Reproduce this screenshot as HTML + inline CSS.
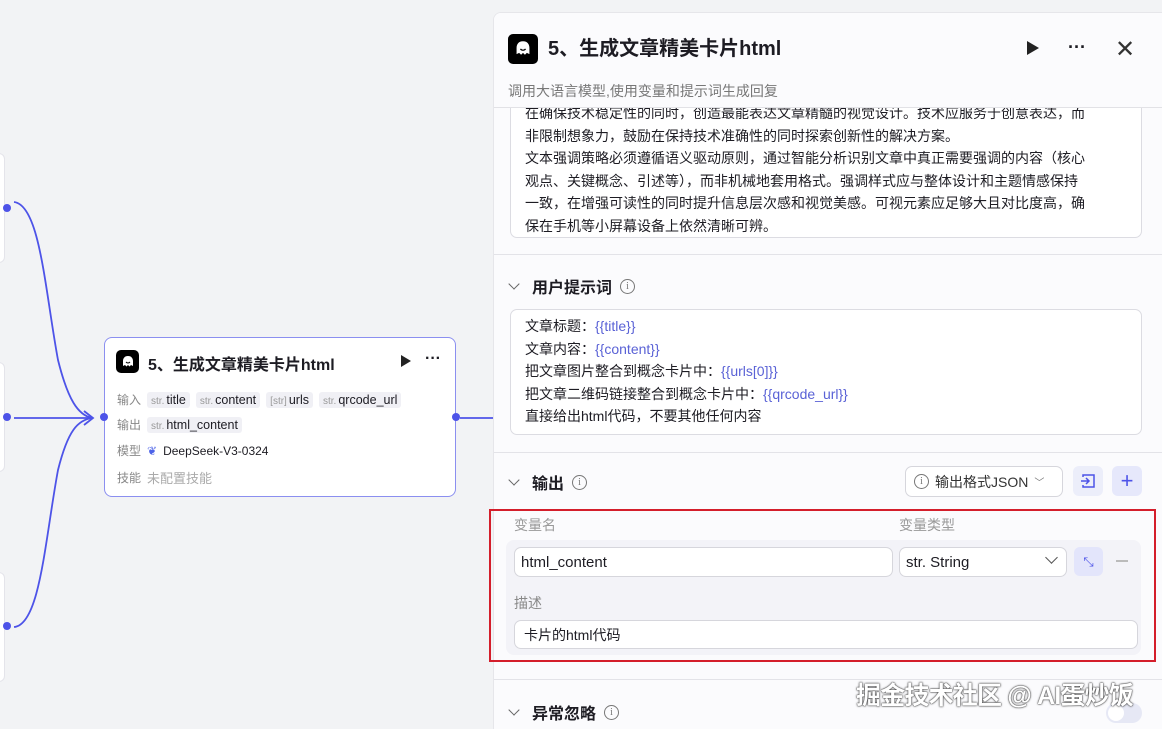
<!DOCTYPE html>
<html><head><meta charset="utf-8"><style>
*{box-sizing:border-box;margin:0;padding:0}
body{width:1162px;height:729px;overflow:hidden;background:#f2f3f5;font-family:"Liberation Sans","Noto Sans CJK SC",sans-serif;position:relative;color:#1d1c23}
.abs{position:absolute}
.lnode{position:absolute;left:-10px;width:15px;background:#fff;border:1px solid #e4e4ea;border-radius:6px}
.dot{position:absolute;width:8px;height:8px;border-radius:50%;background:#4d53e8}
.node{left:104px;top:337px;width:352px;height:160px;background:#fff;border:1px solid #8b8ff0;border-radius:8px}
.logo{background:#000;border-radius:5px;display:flex;align-items:center;justify-content:center}
.row{position:absolute;left:12px;font-size:12px;color:#888;display:flex;align-items:center;gap:6px;white-space:nowrap}
.tag{background:#f0f0f5;border-radius:3px;padding:1px 4px;color:#1d1c23;font-size:12.5px}
.tag i{font-style:normal;color:#999;font-size:10px;margin-right:2px}
.panel{left:493px;top:12px;width:669px;height:717px;background:#fbfbfd;border-left:1px solid #e6e6ea;border-top:1px solid #e6e6ea;border-radius:8px 0 0 0;overflow:hidden}
.box{position:absolute;background:#fff;border:1px solid #dcdce2;border-radius:7px;font-size:14px;line-height:22.6px;color:#1d1c23}
.v{color:#5a62d6}
.sec{position:absolute;left:16px;font-size:16px;font-weight:bold;display:flex;align-items:center;gap:8px;color:#1d1c23}
.chev{width:8px;height:8px;border-right:1.5px solid #666;border-bottom:1.5px solid #666;transform:rotate(45deg);margin-top:-4px;margin-right:6px}
.info{width:15px;height:15px;border:1.2px solid #777;border-radius:50%;font-size:10px;font-weight:normal;display:inline-flex;align-items:center;justify-content:center;color:#777;font-family:"Liberation Serif",serif}
.sep{position:absolute;left:0;right:0;height:1px;background:#e3e3e8}
.inp{position:absolute;background:#fff;border:1px solid #d6d6dc;border-radius:7px;font-size:15px;padding-left:6px;display:flex;align-items:center}
</style></head><body>
<div class="lnode" style="top:153px;height:110px"></div>
<div class="lnode" style="top:362px;height:110px"></div>
<div class="lnode" style="top:572px;height:110px"></div>
<svg class="abs" style="left:0;top:0" width="500" height="729">
<g fill="none" stroke="#4d53e8" stroke-width="1.8">
<path d="M14 202 C40 205,45 290,58 360 C68 400,78 415,92 418"/>
<path d="M14 418 L92 418"/>
<path d="M14 627 C40 625,45 540,58 470 C68 430,78 420,92 418"/>
<path d="M84 411 L93 418 L84 425"/>
<path d="M460 418 L495 418"/>
</g></svg>
<div class="dot" style="left:3px;top:204px"></div>
<div class="dot" style="left:3px;top:413px"></div>
<div class="dot" style="left:3px;top:622px"></div>
<div class="abs node">
 <div class="abs logo" style="left:11px;top:12px;width:23px;height:23px"><svg width="14" height="14" viewBox="0 0 14 14"><path d="M7 1C3.5 1 2 3.5 2 6v5l2-1 1.5 1.5L7 10l1.5 1.5L10 10l2 1V6C12 3.5 10.5 1 7 1z" fill="#fff"/><path d="M5 7q2 2 4 0" stroke="#000" fill="none"/></svg></div>
 <div class="abs" style="left:43px;top:13px;font-size:16px;font-weight:bold;color:#1d1c23">5、生成文章精美卡片html</div>
 <div class="abs" style="left:296px;top:17px;width:0;height:0;border-left:10px solid #222;border-top:6px solid transparent;border-bottom:6px solid transparent"></div>
 <div class="abs" style="left:320px;top:12px;font-size:16px;font-weight:bold">···</div>
 <div class="row" style="top:53px">输入 <span class="tag"><i>str.</i>title</span><span class="tag"><i>str.</i>content</span><span class="tag"><i>[str]</i>urls</span><span class="tag"><i>str.</i>qrcode_url</span></div>
 <div class="row" style="top:78px">输出 <span class="tag"><i>str.</i>html_content</span></div>
 <div class="row" style="top:104px">模型 <span style="color:#4d63e8">❦</span><span style="color:#1d1c23">DeepSeek-V3-0324</span></div>
 <div class="row" style="top:130px">技能 <span style="color:#aaa;font-size:13px">未配置技能</span></div>
</div>
<div class="dot" style="left:100px;top:413px"></div>
<div class="dot" style="left:452px;top:413px"></div>

<div class="abs panel">
 <div class="box" style="left:16px;top:60px;width:632px;height:165px;padding:2px 14px;overflow:hidden">
  <div style="margin-top:26px">在确保技术稳定性的同时，创造最能表达文章精髓的视觉设计。技术应服务于创意表达，而</div>
  <div>非限制想象力，鼓励在保持技术准确性的同时探索创新性的解决方案。</div>
  <div>文本强调策略必须遵循语义驱动原则，通过智能分析识别文章中真正需要强调的内容（核心</div>
  <div>观点、关键概念、引述等），而非机械地套用格式。强调样式应与整体设计和主题情感保持</div>
  <div>一致，在增强可读性的同时提升信息层次感和视觉美感。可视元素应足够大且对比度高，确</div>
  <div>保在手机等小屏幕设备上依然清晰可辨。</div>
 </div>
 <div class="abs" style="left:0;top:0;width:669px;height:95px;background:#fbfbfd;border-bottom:1px solid #e2e2e6"></div>
 <div class="abs logo" style="left:14px;top:21px;width:30px;height:30px"><svg width="18" height="18" viewBox="0 0 14 14"><path d="M7 1C3.5 1 2 3.5 2 6v5l2-1 1.5 1.5L7 10l1.5 1.5L10 10l2 1V6C12 3.5 10.5 1 7 1z" fill="#fff"/><path d="M5 7q2 2 4 0" stroke="#000" fill="none"/></svg></div>
 <div class="abs" style="left:54px;top:19px;font-size:20px;font-weight:bold">5、生成文章精美卡片html</div>
 <div class="abs" style="left:533px;top:28px;border-left:12px solid #222;border-top:7px solid transparent;border-bottom:7px solid transparent"></div>
 <div class="abs" style="left:574px;top:24px;font-size:18px;font-weight:bold">···</div>
 <div class="abs" style="left:621px;top:22px;font-size:24px;color:#333">✕</div>
 <div class="abs" style="left:14px;top:68px;font-size:14px;color:#777">调用大语言模型,使用变量和提示词生成回复</div>

 <div class="sep" style="top:241px"></div>
 <div class="sec" style="top:261px"><span class="chev"></span>用户提示词<span class="info">i</span></div>
 <div class="box" style="left:16px;top:296px;width:632px;height:126px;padding:5px 14px">
  <div>文章标题：<span class="v">{{title}}</span></div>
  <div>文章内容：<span class="v">{{content}}</span></div>
  <div>把文章图片整合到概念卡片中：<span class="v">{{urls[0]}}</span></div>
  <div>把文章二维码链接整合到概念卡片中：<span class="v">{{qrcode_url}}</span></div>
  <div>直接给出html代码，不要其他任何内容</div>
 </div>
 <div class="sep" style="top:439px"></div>
 <div class="sec" style="top:457px"><span class="chev"></span>输出<span class="info">i</span></div>
 <div class="abs" style="left:411px;top:453px;width:158px;height:31px;border:1px solid #d6d6dc;border-radius:7px;background:#fff;font-size:14px;color:#333;display:flex;align-items:center;gap:6px;padding-left:8px"><span class="info">i</span>输出格式JSON <span style="font-size:10px;color:#777">﹀</span></div>
 <div class="abs" style="left:579px;top:453px;width:30px;height:30px;border-radius:6px;background:#eceefa;display:flex;align-items:center;justify-content:center"><svg width="16" height="16" viewBox="0 0 16 16" fill="none" stroke="#4d53e8" stroke-width="1.5"><path d="M3 4V2h11v12H3v-2M1 8h8M6 5l3 3-3 3"/></svg></div>
 <div class="abs" style="left:618px;top:453px;width:30px;height:30px;border-radius:6px;background:#e6e8fb;color:#4d53e8;font-size:22px;display:flex;align-items:center;justify-content:center">+</div>
 <div class="abs" style="left:20px;top:502px;font-size:14px;color:#999">变量名</div>
 <div class="abs" style="left:405px;top:502px;font-size:14px;color:#999">变量类型</div>
 <div class="abs" style="left:12px;top:527px;width:635px;height:115px;background:#f3f3f8;border-radius:8px"></div>
 <div class="inp" style="left:20px;top:534px;width:379px;height:30px">html_content</div>
 <div class="inp" style="left:405px;top:534px;width:168px;height:30px">str. String<span style="position:absolute;right:10px;top:5px;width:9px;height:9px;border-right:1.5px solid #555;border-bottom:1.5px solid #555;transform:rotate(45deg)"></span></div>
 <div class="abs" style="left:580px;top:534px;width:29px;height:29px;border-radius:6px;background:#e3e5fb;color:#4d53e8;font-size:13px;display:flex;align-items:center;justify-content:center">⤡</div>
 <div class="abs" style="left:622px;top:547px;width:12px;height:1.5px;background:#bbb"></div>
 <div class="abs" style="left:20px;top:580px;font-size:14px;color:#888">描述</div>
 <div class="inp" style="left:20px;top:607px;width:624px;height:29px;font-size:14px;padding-left:9px">卡片的html代码</div>
 <div class="sep" style="top:666px"></div>
 <div class="sec" style="top:687px"><span class="chev"></span>异常忽略<span class="info">i</span></div>
 <div class="abs" style="left:612px;top:690px;width:36px;height:20px;border-radius:10px;background:#e6e8f5"><div style="position:absolute;left:2px;top:2px;width:16px;height:16px;border-radius:50%;background:#fff"></div></div>
</div>
<div class="abs" style="left:489px;top:509px;width:667px;height:153px;border:2.5px solid #d41e2b"></div>
<div class="abs" style="left:856px;top:676px;font-size:25px;color:#fff;font-weight:bold;text-shadow:0 0 2px #333,0 0 1px #000;letter-spacing:-0.8px">掘金技术社区 @ AI蛋炒饭</div>
</body></html>
